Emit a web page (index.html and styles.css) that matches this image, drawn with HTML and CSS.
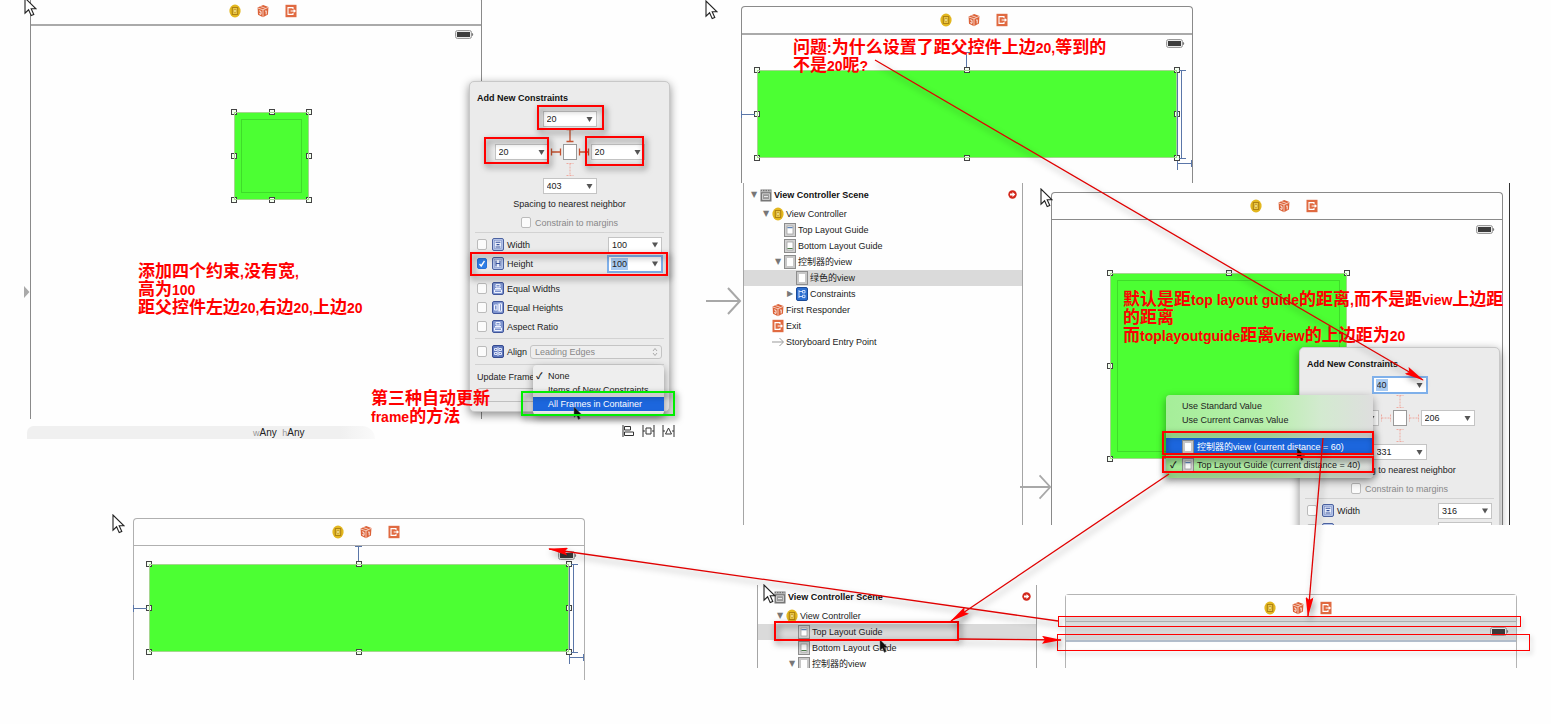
FILE: index.html
```html
<!DOCTYPE html>
<html lang="zh-CN">
<head>
<meta charset="utf-8">
<title>Auto Layout 约束笔记</title>
<link rel="stylesheet" href="styles.css">
</head>
<body>
<svg class="defs" width="0" height="0" aria-hidden="true">
  <symbol id="vc" viewBox="0 0 12 14"><ellipse cx="6" cy="7" rx="5.6" ry="6.4" fill="#e3b71f"/><rect x="3.3" y="3.6" width="5.4" height="6.8" fill="#f0cf4c" stroke="#a97c10"/><rect x="5" y="5.4" width="2" height="3" fill="#fff3b0" stroke="#b58a16" stroke-width=".6"/></symbol>
  <symbol id="cube" viewBox="0 0 12 14"><path d="M.6 3.6 6.2 1l5.2 2-.4 7.6-5 2.6-5-2.4z" fill="#dc6238"/><path d="M.9 4 6 5.8l5.2-2.4M6 5.8V13M3.4 2.6 8.6 4.4" fill="none" stroke="#fbe4da" stroke-width=".8"/><path d="M2.2 6.8l1.8.6v3l-1.8-.8M8.2 7.2l1-.4v3.6" fill="none" stroke="#fff" stroke-width=".9"/></symbol>
  <symbol id="exit" viewBox="0 0 12 14"><rect x=".5" y=".8" width="11" height="12.4" fill="#e06a41"/><path d="M8 5V3.6H3v6.8h5V9M5.6 7h4.6M8.6 5.6 10.2 7 8.6 8.4" fill="none" stroke="#fff" stroke-width="1.1"/></symbol>
  <symbol id="battery" viewBox="0 0 19 9"><rect x=".5" y=".5" width="16" height="8" rx="2" fill="#e8e8e8" stroke="#999"/><rect x="2" y="2" width="13" height="5" fill="#3c3c3c"/><path d="M17 3c1.6 0 1.6 3 0 3z" fill="#777"/></symbol>
  <symbol id="pointer" viewBox="0 0 13 20"><path d="M1 1v15.2l3.6-3.4 2.6 5.8 2.6-1.2-2.6-5.6h4.8z" fill="#fff" stroke="#222" stroke-width="1.1"/></symbol>
  <symbol id="pointer-dark" viewBox="0 0 10 14"><path d="M1 .8v10.6l2.5-2.2 1.8 4.2 2-.9-1.8-4h3.2z" fill="#111" stroke="#777" stroke-width=".5"/></symbol>
  <symbol id="scene-ico" viewBox="0 0 12 14"><rect x=".5" y="1.5" width="11" height="12" fill="#777"/><path d="M.5 3.7h11M2.5 1.5v2M5 1.5v2M7.5 1.5v2M10 1.5v2" stroke="#ccc" stroke-width=".8"/><rect x="2.6" y="5.8" width="6.8" height="5.6" fill="#999" stroke="#ddd" stroke-width=".8"/><path d="M4 8.6h4" stroke="#eee"/></symbol>
  <symbol id="view-ico" viewBox="0 0 12 14"><rect x=".5" y=".5" width="11" height="13" fill="#c8c8c8" stroke="#8d8d8d"/><rect x="3" y="3" width="6" height="8" fill="#fff"/></symbol>
  <symbol id="top-ico" viewBox="0 0 12 14"><rect x=".5" y=".5" width="11" height="13" fill="#d2d2d2" stroke="#8d8d8d"/><rect x="3" y="3" width="6" height="8" fill="#fff" stroke="#999" stroke-width=".7"/><path d="M3.4 4.7h5.2" stroke="#3d6ba8"/></symbol>
  <symbol id="bot-ico" viewBox="0 0 12 14"><rect x=".5" y=".5" width="11" height="13" fill="#d2d2d2" stroke="#8d8d8d"/><rect x="3" y="3" width="6" height="8" fill="#fff" stroke="#999" stroke-width=".7"/><path d="M3.4 9.5h5.2" stroke="#4d7a4a"/></symbol>
  <symbol id="cons-ico" viewBox="0 0 12 14"><rect x=".5" y=".5" width="11" height="13" rx="1.5" fill="#2c6fd0" stroke="#1c4b98"/><path d="M3 3v8M3 4.5h3M3 9.5h3M6.5 3.5h2.5v2.4H6.5zM6.5 8.2H9v2.4H6.5z" fill="none" stroke="#dbe8ff" stroke-width=".9"/></symbol>
  <symbol id="entry" viewBox="0 0 12 14"><path d="M0 7h11M7.5 3 11.5 7 7.5 11" fill="none" stroke="#999"/></symbol>
  <symbol id="w-ico" viewBox="0 0 12 13"><rect x=".5" y=".5" width="11" height="12" rx="1.5" fill="#b3c3e8" stroke="#4c62a0"/><rect x="2.5" y="2.5" width="7" height="8" fill="#e8eefb" stroke="#7f93c8" stroke-width=".6"/><path d="M3.6 4.2h4.8M3.6 9h4.8M4.5 6.6h3" stroke="#36509a" stroke-width="1.1"/></symbol>
  <symbol id="h-ico" viewBox="0 0 12 13"><rect x=".5" y=".5" width="11" height="12" rx="1.5" fill="#b3c3e8" stroke="#4c62a0"/><rect x="2.5" y="2.5" width="7" height="8" fill="#e8eefb" stroke="#7f93c8" stroke-width=".6"/><path d="M4 3.5v6M8 3.5v6M4 6.5h4" stroke="#36509a" stroke-width="1.1"/></symbol>
  <symbol id="eq-ico" viewBox="0 0 12 13"><rect x=".5" y=".5" width="11" height="12" rx="1.5" fill="#7f95cf" stroke="#40559a"/><path d="M4 2.5h4v2.5H4zM2.5 8h7v2.5h-7zM3 6.5h6" fill="none" stroke="#eef2ff"/></symbol>
  <symbol id="eqh-ico" viewBox="0 0 12 13"><rect x=".5" y=".5" width="11" height="12" rx="1.5" fill="#7f95cf" stroke="#40559a"/><path d="M2.5 4h2.5v5H2.5zM7.5 2.8H9.5v7.4H7.5zM6.2 2.5v8" fill="none" stroke="#eef2ff"/></symbol>
  <symbol id="al-ico" viewBox="0 0 12 13"><rect x=".5" y=".5" width="11" height="12" rx="1.5" fill="#5f78bd" stroke="#354a90"/><path d="M6 2v9M2.5 3.5H5v2H2.5zM7 3.5h2.5v2H7zM2.5 7.5H5v2H2.5zM7 7.5h2.5v2H7z" fill="none" stroke="#eef2ff" stroke-width=".9"/></symbol>
  <symbol id="h-strut" viewBox="0 0 14 14"><path d="M2.5 3.5v7M11.5 3.5v7M2.5 7h9" fill="none" stroke="currentColor" stroke-width="1.3"/></symbol>
  <symbol id="v-strut" viewBox="0 0 14 17"><path d="M3.5 2.5h7M3.5 14.5h7M7 2.5v12" fill="none" stroke="currentColor" stroke-width="1.3"/></symbol>
  <symbol id="h-dash" viewBox="0 0 14 14"><path d="M2.5 3.5v7M11.5 3.5v7M2.5 7h9" fill="none" stroke="currentColor" stroke-dasharray="2 1"/></symbol>
  <symbol id="v-dash" viewBox="0 0 14 17"><path d="M3.5 2.5h7M3.5 14.5h7M7 2.5v12" fill="none" stroke="currentColor" stroke-dasharray="2 1"/></symbol>
  <symbol id="struts" viewBox="0 0 452 120"><path d="M222 1.5h7M225.500 1v15M.5 60v7M0 63.500h14M440.500 19v88M438 19.500h7M438 107.500h7M436.500 110v9M436 112.500h15M450.500 109v7M436.500 22v82" fill="none" stroke="#5a76a8"/></symbol>
  <symbol id="flow-arrow" viewBox="0 0 36 32"><path d="M0 16h33M22 3l12 13-12 13" fill="none" stroke="#a8a8a8" stroke-width="2"/></symbol>
</svg>

<main class="canvas">
  <!-- first storyboard scene -->
  <section class="scene scene-a thick">
    <header class="dock"><svg><use href="#vc"/></svg><svg><use href="#cube"/></svg><svg><use href="#exit"/></svg></header>
    <div class="status"><svg class="battery"><use href="#battery"/></svg></div>
  </section>
  <div class="green green-a inset"><i></i><i></i><i></i><i></i><i class="none"></i><i></i><i></i><i></i><i></i></div>
  <svg class="marker" viewBox="0 0 6 14"><path d="M0 1 5.5 7 0 13z" fill="#aaa"/></svg>
  <footer class="sizebar"><small>w</small>Any&nbsp; <small>h</small>Any</footer>
  <nav class="tools">
    <button aria-label="Align"><svg viewBox="0 0 13 12"><path d="M1 0v12M2.5 1.5h6v3.5h-6zM2.5 7h9v3.5h-9z"/></svg></button>
    <button aria-label="Pin"><svg viewBox="0 0 13 12"><path d="M1 0v12M12 0v12M1 6h2M10 6h2M4 3h5v6H4z"/></svg></button>
    <button aria-label="Resolve"><svg viewBox="0 0 13 12"><path d="M1 0v12M12 0v12M1 6h2M10 6h2M3.5 9h6L6.5 3z"/></svg></button>
  </nav>

  <form class="panel panel-a">
    <h2>Add New Constraints</h2>
    <div class="spacing">
      <div class="combo top"><input aria-label="Top" value="20"><button type="button" aria-label="Top values"></button></div>
      <svg class="vs up on"><use href="#v-strut"/></svg>
      <div class="combo left"><input aria-label="Left" value="20"><button type="button" aria-label="Left values"></button></div>
      <svg class="hs on"><use href="#h-strut"/></svg><span class="box"></span><svg class="hs on"><use href="#h-strut"/></svg>
      <div class="combo right"><input aria-label="Right" value="20"><button type="button" aria-label="Right values"></button></div>
      <svg class="vs down"><use href="#v-dash"/></svg>
      <div class="combo bottom"><input aria-label="Bottom" value="403"><button type="button" aria-label="Bottom values"></button></div>
    </div>
    <p class="hint">Spacing to nearest neighbor</p>
    <label class="margins"><input type="checkbox">Constrain to margins</label>
    <div class="group">
      <div class="row"><label><input type="checkbox"><svg><use href="#w-ico"/></svg>Width</label><div class="combo"><input aria-label="Width value" value="100"><button type="button" aria-label="Width values"></button></div></div>
      <div class="row"><label><input type="checkbox" checked><svg><use href="#h-ico"/></svg>Height</label><div class="combo focus w3"><input aria-label="Height value" value="100"><button type="button" aria-label="Height values"></button></div></div>
    </div>
    <div class="group plain">
      <div class="row"><label><input type="checkbox"><svg><use href="#eq-ico"/></svg>Equal Widths</label></div>
      <div class="row"><label><input type="checkbox"><svg><use href="#eqh-ico"/></svg>Equal Heights</label></div>
      <div class="row"><label><input type="checkbox"><svg><use href="#eq-ico"/></svg>Aspect Ratio</label></div>
    </div>
    <div class="group align">
      <div class="row"><label><input type="checkbox"><svg><use href="#al-ico"/></svg>Align</label><select aria-label="Align edges"><option>Leading Edges</option></select></div>
    </div>
    <div class="group update">
      <div class="row">Update Frame</div>
      <button type="button" class="add" aria-label="Add Constraints"></button>
    </div>
    <div class="menu menu-a">
      <button type="button"><b>✓</b>None</button>
      <button type="button"><b></b>Items of New Constraints</button>
      <button type="button" class="hot"><b></b>All Frames in Container</button>
    </div>
  </form>

  <!-- stretched view -->
  <section class="scene scene-b thick">
    <header class="dock"><svg><use href="#vc"/></svg><svg><use href="#cube"/></svg><svg><use href="#exit"/></svg></header>
    <div class="status"><svg class="battery"><use href="#battery"/></svg></div>
  </section>
  <div class="green green-b"><i></i><i></i><i></i><i></i><i class="none"></i><i></i><i></i><i></i><i></i><svg class="struts"><use href="#struts"/></svg></div>

  <!-- outline and scene -->
  <section class="window window-c">
    <ul class="outline">
      <li class="head l0"><span class="tri">▼</span><svg><use href="#scene-ico"/></svg>View Controller Scene<svg class="warn" viewBox="0 0 9 9"><circle cx="4.5" cy="4.5" r="4.2" fill="#d3281c"/><path d="M2 3.5h2.5V2L7.3 4.5 4.5 7V5.5H2z" fill="#fff"/></svg></li>
      <li class="l1"><span class="tri">▼</span><svg><use href="#vc"/></svg>View Controller</li>
      <li class="l2"><span class="tri"></span><svg><use href="#top-ico"/></svg>Top Layout Guide</li>
      <li class="l2"><span class="tri"></span><svg><use href="#bot-ico"/></svg>Bottom Layout Guide</li>
      <li class="l2"><span class="tri">▼</span><svg><use href="#view-ico"/></svg>控制器的view</li>
      <li class="l3 sel"><span class="tri"></span><svg><use href="#view-ico"/></svg>绿色的view</li>
      <li class="l3"><span class="tri">▶</span><svg><use href="#cons-ico"/></svg>Constraints</li>
      <li class="l1"><span class="tri"></span><svg><use href="#cube"/></svg>First Responder</li>
      <li class="l1"><span class="tri"></span><svg><use href="#exit"/></svg>Exit</li>
      <li class="l1"><span class="tri"></span><svg><use href="#entry"/></svg>Storyboard Entry Point</li>
    </ul>
    <div class="stage">
      <div class="scene">
        <header class="dock"><svg><use href="#vc"/></svg><svg><use href="#cube"/></svg><svg><use href="#exit"/></svg></header>
        <div class="status"><svg class="battery"><use href="#battery"/></svg></div>
      </div>
    </div>
    <div class="green green-c inset"><i></i><i></i><i></i><i></i><i class="none"></i><i></i><i></i><i></i><i></i></div>
    <form class="panel panel-c">
      <h2>Add New Constraints</h2>
      <div class="spacing">
        <div class="combo top focus w2"><input aria-label="Top" value="40"><button type="button" aria-label="Top values"></button></div>
        <svg class="vs up"><use href="#v-dash"/></svg>
        <div class="combo left"><input aria-label="Left" value=""><button type="button" aria-label="Left values"></button></div>
        <svg class="hs"><use href="#h-dash"/></svg><span class="box"></span><svg class="hs"><use href="#h-dash"/></svg>
        <div class="combo right"><input aria-label="Right" value="206"><button type="button" aria-label="Right values"></button></div>
        <svg class="vs down"><use href="#v-dash"/></svg>
        <div class="combo bottom"><input aria-label="Bottom" value="331"><button type="button" aria-label="Bottom values"></button></div>
      </div>
      <p class="hint">Spacing to nearest neighbor</p>
      <label class="margins"><input type="checkbox">Constrain to margins</label>
      <div class="group">
        <div class="row"><label><input type="checkbox"><svg><use href="#w-ico"/></svg>Width</label><div class="combo"><input aria-label="Width value" value="316"><button type="button" aria-label="Width values"></button></div></div>
        <div class="row"><label><input type="checkbox"><svg><use href="#h-ico"/></svg></label><div class="combo"><input aria-label="Height value" value=""><button type="button" aria-label="Height values"></button></div></div>
      </div>
    </form>
    <div class="menu menu-c">
      <button type="button"><b></b>Use Standard Value</button>
      <button type="button"><b></b>Use Current Canvas Value</button>
      <button type="button" class="hot"><b></b><svg><use href="#view-ico"/></svg>控制器的view (current distance = 60)</button>
      <button type="button" class="last"><b>✓</b><svg><use href="#top-ico"/></svg>Top Layout Guide (current distance = 40)</button>
    </div>
  </section>
  <svg class="flow flow-1"><use href="#flow-arrow"/></svg>
  <svg class="flow flow-2"><use href="#flow-arrow"/></svg>

  <!-- pinned to the controller view -->
  <section class="scene scene-d">
    <header class="dock"><svg><use href="#vc"/></svg><svg><use href="#cube"/></svg><svg><use href="#exit"/></svg></header>
    <div class="status"><svg class="battery"><use href="#battery"/></svg></div>
  </section>
  <div class="green green-d"><i></i><i></i><i></i><i></i><i class="none"></i><i></i><i></i><i></i><i></i><svg class="struts"><use href="#struts"/></svg></div>

  <!-- top layout guide selected -->
  <section class="window window-e">
    <ul class="outline">
      <li class="head l0"><span class="tri"></span><svg><use href="#scene-ico"/></svg>View Controller Scene<svg class="warn" viewBox="0 0 9 9"><circle cx="4.5" cy="4.5" r="4.2" fill="#d3281c"/><path d="M2 3.5h2.5V2L7.3 4.5 4.5 7V5.5H2z" fill="#fff"/></svg></li>
      <li class="l1"><span class="tri">▼</span><svg><use href="#vc"/></svg>View Controller</li>
      <li class="l2 sel"><span class="tri"></span><svg><use href="#top-ico"/></svg>Top Layout Guide</li>
      <li class="l2"><span class="tri"></span><svg><use href="#bot-ico"/></svg>Bottom Layout Guide</li>
      <li class="l2"><span class="tri">▼</span><svg><use href="#view-ico"/></svg>控制器的view</li>
    </ul>
    <div class="stage">
      <div class="scene guide">
        <header class="dock"><svg><use href="#vc"/></svg><svg><use href="#cube"/></svg><svg><use href="#exit"/></svg></header>
        <div class="status"><svg class="battery"><use href="#battery"/></svg></div>
      </div>
    </div>
  </section>

  <svg class="ptr p1"><use href="#pointer"/></svg>
  <svg class="ptr p2"><use href="#pointer"/></svg>
  <svg class="ptr p3"><use href="#pointer"/></svg>
  <svg class="ptr p4"><use href="#pointer"/></svg>
  <svg class="ptr p5"><use href="#pointer"/></svg>
  <svg class="ptr dark d1"><use href="#pointer-dark"/></svg>
  <svg class="ptr dark d2"><use href="#pointer-dark"/></svg>
  <svg class="ptr dark d3"><use href="#pointer-dark"/></svg>

  <div class="frame f1"></div><div class="frame f2"></div><div class="frame f3"></div><div class="frame f4"></div>
  <div class="frame f5"></div><div class="frame f6"></div><div class="frame f7"></div>
  <div class="frame thin f8"></div><div class="frame thin f9"></div><div class="frame ok f10"></div>

  <p class="note n1">添加四个约束<span>,</span>没有宽<span>,</span><br>高为<span>100</span><br>距父控件左边<span>20,</span>右边<span>20,</span>上边<span>20</span></p>
  <p class="note n2">第三种自动更新<br><span>frame</span>的方法</p>
  <p class="note n3">问题<span>:</span>为什么设置了距父控件上边<span>20,</span>等到的<br>不是<span>20</span>呢<span>?</span></p>
  <p class="note n4">默认是距<span>top layout guide</span>的距离<span>,</span>而不是距<span>view</span>上边距<br>的距离<br>而<span>toplayoutguide</span>距离<span>view</span>的上边距为<span>20</span></p>

  <svg class="arrows" width="1551" height="724" viewBox="0 0 1551 724">
    <defs><marker id="tip" viewBox="0 0 20 8" refX="19" refY="4" markerWidth="20" markerHeight="8" markerUnits="userSpaceOnUse" orient="auto"><path d="M0 0 20 4 0 8 3 4z" fill="#f00"/></marker></defs>
    <g fill="none" stroke="#e00000" stroke-width="1.3">
      <path d="M875 60 1423 380" marker-end="url(#tip)"/>
      <path d="M1169 474 951 621" marker-end="url(#tip)"/>
      <path d="M1323 438 1308 616" marker-end="url(#tip)"/>
      <path d="M1058 621 549 549" marker-end="url(#tip)"/>
      <path d="M959 639 1061 640" marker-end="url(#tip)"/>
    </g>
  </svg>
</main>
</body>
</html>
```
FILE: styles.css
```css
* { box-sizing: border-box; }
body {
  margin: 0;
  background: #fefefe;
  color: #222;
  font: 9px/16px "Liberation Sans", "Noto Sans CJK SC", sans-serif;
}
h2, p, ul { margin: 0; padding: 0; }
button, input, select { font: inherit; color: inherit; }
button { padding: 0; border: 0; background: none; text-align: left; }
.defs { position: absolute; }
.canvas { position: relative; min-height: 100vh; overflow: hidden; }

/* storyboard scenes */
.scene {
  width: 452px;
  border: 1px solid #8a8a8a;
  border-bottom: 0;
  border-radius: 4px 4px 0 0;
  background: #fefefe;
}
.dock {
  display: flex;
  justify-content: center;
  align-items: center;
  gap: 16px;
  height: 27px;
  padding-left: 14px;
  border-bottom: 1px solid #8a8a8a;
}
.thick .dock { height: 28px; border-bottom: 2px solid #aaa; }
.dock svg { width: 12px; height: 14px; }
.status { display: flex; justify-content: flex-end; padding: 5px 7px 0 0; }
.thick .status { padding-top: 4px; }
.battery { width: 19px; height: 9px; }
.scene-a, .scene-b, .scene-d { position: absolute; }
.scene-a { left: 30px; top: -3px; height: 422px; }
.scene-b { left: 741px; top: 6px; height: 177px; }
.scene-d { left: 133px; top: 518px; height: 162px; border-color: #b0b0b0; }
.scene-d .dock { border-color: #b0b0b0; }

/* selected green views, with resize handles */
.green {
  position: absolute;
  display: grid;
  grid-template-columns: repeat(3, 0);
  grid-template-rows: repeat(3, 0);
  justify-content: space-between;
  align-content: space-between;
  outline: 1px solid #a5d68f;
  outline-offset: -1px;
  background: #4cff33;
}
.green i { width: 6px; height: 6px; margin: -3px; border: 1px solid #444; background: #f4fff0; }
.green i.none { visibility: hidden; }
.inset::after { content: ""; position: absolute; inset: 7px; border: 1px solid #3fdc2a; }
.green-a { left: 234px; top: 112px; width: 75px; height: 88px; }
.green-b { left: 757px; top: 70px; width: 420px; height: 88px; }
.green-c { left: 367px; top: 90px; width: 237px; height: 186px; }
.green-d { left: 149px; top: 564px; width: 420px; height: 88px; }
.struts { position: absolute; left: -16px; top: -19px; width: 452px; height: 120px; }

.marker { position: absolute; left: 24px; top: 285px; width: 6px; height: 14px; }
.sizebar {
  position: absolute;
  left: 27px;
  top: 426px;
  width: 348px;
  height: 13px;
  padding-left: 226px;
  border-radius: 8px 16px 0 0;
  background: linear-gradient(90deg, #f0f0f0 90%, #fafafa);
  font-size: 10px;
  line-height: 13px;
}
.sizebar small { color: #999; font-size: 9px; }
.tools { position: absolute; left: 622px; top: 425px; display: flex; gap: 7px; }
.tools svg { display: block; width: 13px; height: 12px; fill: none; stroke: #333; }

/* constraint popovers */
.panel {
  position: absolute;
  width: 201px;
  padding-top: 6px;
  border: 1px solid #c8c8c8;
  border-radius: 5px;
  background: #ebebeb;
  box-shadow: 0 3px 10px rgba(0, 0, 0, .45);
}
.panel-a { left: 469px; top: 81px; height: 331px; }
.panel-c { left: 556px; top: 164px; height: 332px; }
.panel h2 { padding-left: 7px; color: #111; font-size: 9px; line-height: 20px; }
.spacing {
  display: grid;
  grid-template-columns: 54px 14px 14px 14px 54px;
  grid-template-rows: 16px 17px 16px 18px 16px;
  justify-content: center;
  align-items: center;
  padding-top: 3px;
  color: #eeaaa0;
}
.spacing .on { color: #c6512f; }
.top { grid-area: 1 / 1 / 2 / -1; justify-self: center; }
.up { grid-area: 2 / 3; }
.left { grid-area: 3 / 1; }
.left + .hs { grid-area: 3 / 2; }
.box { grid-area: 3 / 3; width: 14px; height: 16px; border: 1px solid #999; background: #fff; }
.box + .hs { grid-area: 3 / 4; }
.right { grid-area: 3 / 5; }
.down { grid-area: 4 / 3; }
.bottom { grid-area: 5 / 1 / 6 / -1; justify-self: center; }
.vs { width: 14px; height: 17px; }
.hs { width: 14px; height: 14px; }
.combo { display: flex; width: 54px; height: 16px; border: 1px solid #c4c4c4; background: #fff; color: #222; }
.combo input { width: 38px; min-width: 0; padding: 0 0 0 3px; border: 0; background: none; outline: 0; }
.combo button {
  flex: 1;
  background: #555;
  clip-path: polygon(5px 5px, 11px 5px, 8px 10px);
}
.focus { outline: 2px solid #7fb0ea; outline-offset: -1px; }
.w3 input { background: linear-gradient(#a9cbf2, #a9cbf2) no-repeat 2px 1px / 17px 12px; }
.w2 input { background: linear-gradient(#a9cbf2, #a9cbf2) no-repeat 2px 1px / 12px 12px; }
.hint { padding-top: 1px; text-align: center; line-height: 18px; }
.margins { display: flex; justify-content: center; align-items: center; gap: 4px; height: 19px; color: #888; }
.panel input[type="checkbox"] {
  appearance: none;
  width: 10px;
  height: 11px;
  margin: 0;
  border: 1px solid #bbb;
  border-radius: 2px;
  background: #fbfbfb;
}
.panel input[type="checkbox"]:checked {
  border-color: #2a72d8;
  background: #2f7fe6 url("data:image/svg+xml,%3Csvg xmlns='http://www.w3.org/2000/svg' viewBox='0 0 8 9'%3E%3Cpath d='M1.500 5 3.200 7 6.500 1.800' fill='none' stroke='white' stroke-width='1.400'/%3E%3C/svg%3E") center / 8px 9px no-repeat;
}
.group { margin: 0 5px; padding: 2px 2px 0; border-top: 1px solid #d2d2d2; }
.plain { border: 0; padding-top: 6px; padding-bottom: 2px; }
.row { display: flex; align-items: center; justify-content: space-between; height: 19px; }
.row label { display: flex; align-items: center; }
.row label svg { width: 12px; height: 13px; margin: 0 3px 0 5px; }
.row select {
  appearance: none;
  width: 132px;
  height: 14px;
  padding: 0 4px;
  border: 1px solid #c4c4c4;
  border-radius: 3px;
  background: #eee url("data:image/svg+xml,%3Csvg xmlns='http://www.w3.org/2000/svg' viewBox='0 0 6 10'%3E%3Cpath d='M1 4 3 1.500 5 4M1 6 3 8.500 5 6' fill='none' stroke='%23999' stroke-width='.8'/%3E%3C/svg%3E") right 3px center / 6px 10px no-repeat;
  color: #888;
  line-height: 12px;
}
.align { height: 26px; padding-top: 3px; }
.update { padding-top: 2px; }
.add { display: block; width: 100%; height: 14px; margin-top: 2px; border: 1px solid #c0c0c0; border-radius: 3px; }

/* pop-up menus */
.menu { position: absolute; padding: 4px 0; border-radius: 4px; box-shadow: 0 3px 8px rgba(0, 0, 0, .4); background: #eee; }
.menu button { display: flex; align-items: center; width: 100%; height: 14px; white-space: nowrap; }
.menu b { flex: none; width: 12px; }
.menu .hot { background: #1c66dd; color: #fff; }
.menu-a { left: 63px; top: 283px; width: 131px; }
.menu-a button { padding-left: 3px; }
.menu-c {
  left: 423px;
  top: 212px;
  width: 207px;
  background: linear-gradient(90deg, #a5ee99, #b8efac 50%, #d3ead0 75%, #dedede);
}
.menu-c button { padding-left: 4px; }
.menu-c svg { flex: none; width: 12px; height: 14px; margin-right: 3px; }
.menu-c .hot { height: 17px; margin-top: 11px; }
.menu-c .last { height: 18px; margin-top: 1px; }

/* document outline */
.window { position: absolute; display: flex; overflow: hidden; background: #fefefe; }
.window-c { left: 743px; top: 183px; width: 767px; height: 342px; border-right: 1px solid #333; }
.window-e { left: 757px; top: 585px; width: 774px; height: 83px; }
.outline { flex: none; width: 280px; border: solid #a5a5a5; border-width: 0 1px; list-style: none; }
.outline li { display: flex; align-items: center; height: 16px; }
.outline li svg { flex: none; width: 12px; height: 14px; margin: 0 2px 0 1px; }
.outline .head { height: 23px; font-weight: bold; color: #111; }
.outline .head .warn { width: 9px; height: 9px; margin: 0 5px 0 auto; }
.tri { width: 10px; color: #777; font: 8px/16px "DejaVu Sans", sans-serif; text-align: center; }
.l0 { padding-left: 5px; }
.l1 { padding-left: 17px; }
.l2 { padding-left: 29px; }
.l3 { padding-left: 41px; }
.sel { background: #dadada; }
.stage { padding: 9px 0 0 28px; }
.stage .scene { height: 100%; }
.stage .guide, .guide .dock { border-color: #b4b4b4; }
.guide .dock { background: linear-gradient(#fefefe 22px, #dedede 22px); }
.guide .status { height: 20px; background: #dedede; border-bottom: 2px solid #b5c0cf; }

.flow { position: absolute; width: 36px; height: 32px; }
.flow-1 { left: 706px; top: 285px; }
.flow-2 { left: 1020px; top: 471px; width: 32px; }

/* mouse pointers */
.ptr { position: absolute; width: 13px; height: 20px; }
.p1 { left: 24px; top: -3px; }
.p2 { left: 705px; top: 0; }
.p3 { left: 1040px; top: 188px; }
.p4 { left: 112px; top: 514px; }
.p5 { left: 763px; top: 584px; }
.dark { width: 10px; height: 14px; }
.d1 { left: 573px; top: 406px; }
.d2 { left: 1296px; top: 447px; }
.d3 { left: 879px; top: 639px; }

/* annotations */
.frame { position: absolute; border: 2px solid #f00; filter: drop-shadow(2px 3px 3px rgba(0, 0, 0, .6)); }
.thin { border-width: 1px; filter: drop-shadow(2px 3px 2px rgba(0, 0, 0, .25)); }
.ok { border-color: #0e0; }
.f1 { left: 537px; top: 105px; width: 67px; height: 25px; }
.f2 { left: 484px; top: 137px; width: 65px; height: 27px; }
.f3 { left: 585px; top: 136px; width: 59px; height: 30px; }
.f4 { left: 470px; top: 252px; width: 198px; height: 24px; }
.f5 { left: 1162px; top: 431px; width: 212px; height: 24px; }
.f6 { left: 1162px; top: 456px; width: 212px; height: 17px; }
.f7 { left: 774px; top: 621px; width: 185px; height: 20px; }
.f8 { left: 1058px; top: 616px; width: 463px; height: 11px; }
.f9 { left: 1057px; top: 634px; width: 473px; height: 17px; }
.f10 { left: 521px; top: 391px; width: 154px; height: 25px; }
.note {
  position: absolute;
  color: #f00;
  font: bold 17px/18px "Noto Sans CJK SC", sans-serif;
  white-space: nowrap;
}
.note span { font: bold 14px/10px "Liberation Sans", sans-serif; }
.n1 { left: 138px; top: 261px; }
.n2 { left: 371px; top: 388px; }
.n3 { left: 793px; top: 37px; }
.n4 { left: 1123px; top: 289px; }
.arrows { position: absolute; left: 0; top: 0; filter: drop-shadow(2px 4px 3px rgba(0, 0, 0, .4)); pointer-events: none; }
```
